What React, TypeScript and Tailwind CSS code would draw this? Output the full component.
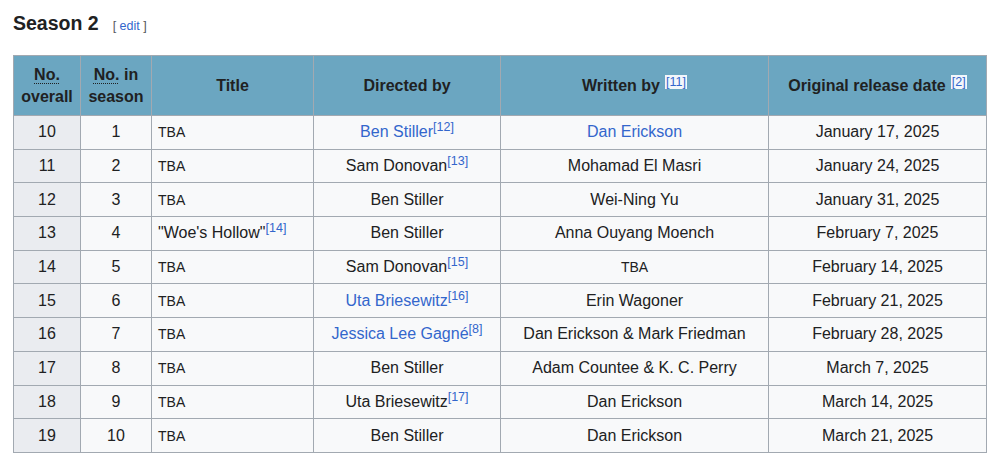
import React from "react";

type Cell = { text: string; link?: boolean; ref?: string; tba?: boolean };

const rows: { no: string; ns: string; title: Cell; dir: Cell; wr: Cell; date: string }[] = [
  { no: "10", ns: "1", title: { text: "TBA", tba: true }, dir: { text: "Ben Stiller", link: true, ref: "12" }, wr: { text: "Dan Erickson", link: true }, date: "January 17, 2025" },
  { no: "11", ns: "2", title: { text: "TBA", tba: true }, dir: { text: "Sam Donovan", ref: "13" }, wr: { text: "Mohamad El Masri" }, date: "January 24, 2025" },
  { no: "12", ns: "3", title: { text: "TBA", tba: true }, dir: { text: "Ben Stiller" }, wr: { text: "Wei-Ning Yu" }, date: "January 31, 2025" },
  { no: "13", ns: "4", title: { text: "\"Woe's Hollow\"", ref: "14" }, dir: { text: "Ben Stiller" }, wr: { text: "Anna Ouyang Moench" }, date: "February 7, 2025" },
  { no: "14", ns: "5", title: { text: "TBA", tba: true }, dir: { text: "Sam Donovan", ref: "15" }, wr: { text: "TBA", tba: true }, date: "February 14, 2025" },
  { no: "15", ns: "6", title: { text: "TBA", tba: true }, dir: { text: "Uta Briesewitz", link: true, ref: "16" }, wr: { text: "Erin Wagoner" }, date: "February 21, 2025" },
  { no: "16", ns: "7", title: { text: "TBA", tba: true }, dir: { text: "Jessica Lee Gagné", link: true, ref: "8" }, wr: { text: "Dan Erickson & Mark Friedman" }, date: "February 28, 2025" },
  { no: "17", ns: "8", title: { text: "TBA", tba: true }, dir: { text: "Ben Stiller" }, wr: { text: "Adam Countee & K. C. Perry" }, date: "March 7, 2025" },
  { no: "18", ns: "9", title: { text: "TBA", tba: true }, dir: { text: "Uta Briesewitz", ref: "17" }, wr: { text: "Dan Erickson" }, date: "March 14, 2025" },
  { no: "19", ns: "10", title: { text: "TBA", tba: true }, dir: { text: "Ben Stiller" }, wr: { text: "Dan Erickson" }, date: "March 21, 2025" },
];

function Ref({ n }: { n: string }) {
  return <sup className="text-[12.5px] text-[#3366cc] relative -top-[6px] leading-none">[{n}]</sup>;
}

function CellContent({ c }: { c: Cell }) {
  return (
    <>
      <span className={`${c.link ? "text-[#3366cc]" : ""} ${c.tba ? "text-[14px]" : ""}`}>{c.text}</span>
      {c.ref && <Ref n={c.ref} />}
    </>
  );
}

function HeadRef({ n }: { n: string }) {
  return (
    <sup className="ml-[5px] text-[12.5px] font-normal text-[#3366cc] bg-[#f2f6fb] px-[1px] leading-none relative -top-[5px]">[{n}]</sup>
  );
}

export default function App() {
  const th = "border border-[#a2a9b1] bg-[#6ba6c1] font-bold text-[16px] text-[#202122] text-center leading-[22px]";
  const td = "border border-[#a2a9b1] text-[16px] text-[#202122] h-[33.7px] py-0 leading-[20px]";
  return (
    <div className="w-[1000px] h-[462px] bg-white overflow-hidden" style={{ fontFamily: '"Liberation Sans", Arial, sans-serif' }}>
      <div className="pl-[13px] pt-[10px] flex items-baseline">
        <h2 className="text-[19.5px] font-bold text-[#202122] leading-[26px]">Season 2</h2>
        <span className="ml-[14px] text-[12.5px] text-[#54595d]">
          [ <span className="text-[#3366cc]">edit</span> ]
        </span>
      </div>
      <table className="mt-[19px] ml-[13px] border-collapse table-fixed w-[973px]">
        <colgroup>
          <col className="w-[67px]" />
          <col className="w-[71px]" />
          <col className="w-[162px]" />
          <col className="w-[187px]" />
          <col className="w-[268px]" />
          <col className="w-[218px]" />
        </colgroup>
        <thead>
          <tr className="h-[60px]">
            <th className={th}>
              <span className="underline decoration-dotted decoration-1 underline-offset-[3px]">No.</span>
              <br />overall
            </th>
            <th className={th}>
              <span className="underline decoration-dotted decoration-1 underline-offset-[3px]">No.</span> in
              <br />season
            </th>
            <th className={th}>Title</th>
            <th className={th}>Directed by</th>
            <th className={th}>
              Written by<HeadRef n="11" />
            </th>
            <th className={th}>
              Original release date<HeadRef n="2" />
            </th>
          </tr>
        </thead>
        <tbody>
          {rows.map((r) => (
            <tr key={r.no}>
              <td className={`${td} bg-[#eaecf0] text-center`}>{r.no}</td>
              <td className={`${td} bg-[#f8f9fa] text-center`}>{r.ns}</td>
              <td className={`${td} bg-[#f8f9fa] text-left pl-[6px]`}>
                <CellContent c={r.title} />
              </td>
              <td className={`${td} bg-[#f8f9fa] text-center`}>
                <CellContent c={r.dir} />
              </td>
              <td className={`${td} bg-[#f8f9fa] text-center`}>
                <CellContent c={r.wr} />
              </td>
              <td className={`${td} bg-[#f8f9fa] text-center`}>{r.date}</td>
            </tr>
          ))}
        </tbody>
      </table>
    </div>
  );
}
